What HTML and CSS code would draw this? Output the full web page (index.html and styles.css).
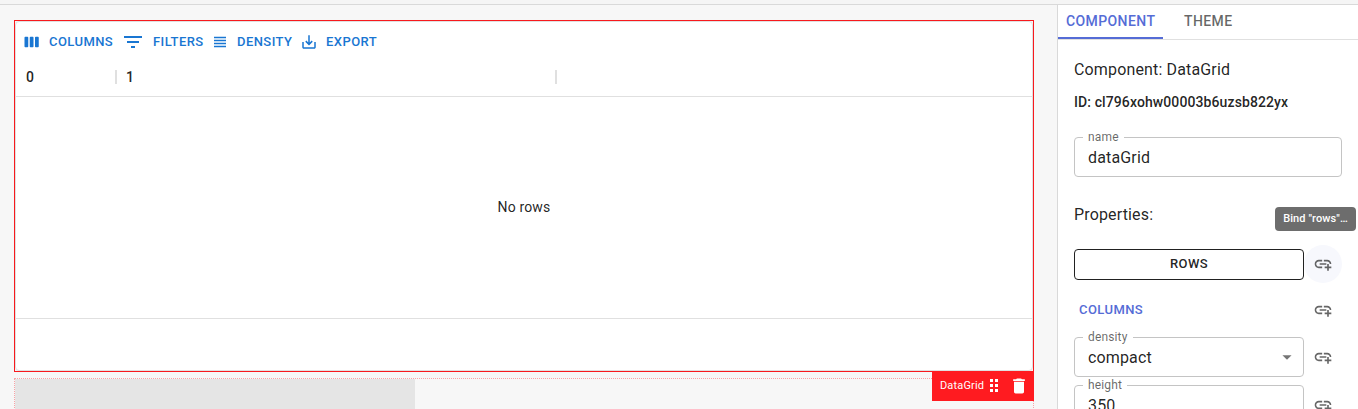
FILE: index.html
```html
<!DOCTYPE html>
<html lang="en">
<head>
<meta charset="utf-8">
<title>Editor</title>
<link rel="stylesheet" href="styles.css">
</head>
<body>
<svg class="defs" aria-hidden="true">
  <symbol id="add-link" viewBox="0 0 24 24"><path d="M8 11h8v2H8zm12.1 1H22c0-2.76-2.24-5-5-5h-4v1.9h4c1.71 0 3.1 1.39 3.1 3.1zM3.9 12c0-1.71 1.39-3.1 3.1-3.1h4V7H7c-2.76 0-5 2.24-5 5s2.24 5 5 5h4v-1.9H7c-1.71 0-3.1-1.39-3.1-3.1zM19 12h-2v3h-3v2h3v3h2v-3h3v-2h-3z"/></symbol>
</svg>
<div class="app">
  <header class="appbar"></header>
  <main class="workspace">
    <section class="canvas">
      <div class="selection">
        <div class="grid">
          <div class="toolbar">
            <button class="tool tool-columns"><svg viewBox="0 0 24 24"><path d="M6 5H3c-.55 0-1 .45-1 1v12c0 .55.45 1 1 1h3c.55 0 1-.45 1-1V6c0-.55-.45-1-1-1zm14 0h-3c-.55 0-1 .45-1 1v12c0 .55.45 1 1 1h3c.55 0 1-.45 1-1V6c0-.55-.45-1-1-1zm-7 0h-3c-.55 0-1 .45-1 1v12c0 .55.45 1 1 1h3c.55 0 1-.45 1-1V6c0-.55-.45-1-1-1z"/></svg><span>Columns</span></button>
            <button class="tool tool-filters"><svg viewBox="0 0 24 24"><path d="M10 18h4v-2h-4v2zM3 6v2h18V6H3zm3 7h12v-2H6v2z"/></svg><span>Filters</span></button>
            <button class="tool tool-density"><svg viewBox="0 0 12 12"><path class="density-fill" d="M0 0h12v12H0z"/><path d="M0 1h12v1H0zM0 4h12v1H0zM0 7h12v1H0zM0 10h12v1H0z"/></svg><span>Density</span></button>
            <button class="tool tool-export"><svg viewBox="0 0 24 24"><path d="M19 12v7H5v-7H3v7c0 1.1.9 2 2 2h14c1.1 0 2-.9 2-2v-7h-2zm-6 .67l2.59-2.58L17 11.5l-5 5-5-5 1.41-1.41L11 12.67V3h2z"/></svg><span>Export</span></button>
          </div>
          <div class="columns">
            <div class="column column-first">0</div>
            <div class="column column-second">1</div>
          </div>
          <div class="rows">No rows</div>
          <div class="grid-footer"></div>
        </div>
        <div class="hud">
          <span>DataGrid</span>
          <svg class="drag" viewBox="0 0 20 20"><path d="M6 3h3v3H6zm5 0h3v3h-3zM6 8h3v3H6zm5 0h3v3h-3zM6 13h3v3H6zm5 0h3v3h-3z"/></svg>
          <svg class="trash" viewBox="0 0 24 24"><path d="M6 19c0 1.1.9 2 2 2h8c1.1 0 2-.9 2-2V7H6v12zM19 4h-3.500l-1-1h-5l-1 1H5v2h14V4z"/></svg>
        </div>
      </div>
      <div class="slot"><div class="slot-fill"></div></div>
    </section>
    <aside class="panel">
      <nav class="tabs"><a class="tab tab-active">Component</a><a class="tab">Theme</a></nav>
      <div class="panel-body">
        <div class="component-name">Component: DataGrid</div>
        <div class="component-id">ID: cl796xohw00003b6uzsb822yx</div>
        <fieldset class="field field-name"><legend>name</legend><div class="value">dataGrid</div></fieldset>
        <div class="properties">Properties:<div class="tooltip">Bind "rows"…</div></div>
        <div class="prop prop-rows"><button class="outlined">Rows</button><span class="bind bind-hover"><svg><use href="#add-link"/></svg></span></div>
        <div class="prop prop-columns"><button class="text-button">Columns</button><span class="bind"><svg><use href="#add-link"/></svg></span></div>
        <div class="prop prop-select"><fieldset class="field"><legend>density</legend><div class="value">compact<svg class="caret" viewBox="0 0 24 24"><path d="M7 10l5 5 5-5z"/></svg></div></fieldset><span class="bind"><svg><use href="#add-link"/></svg></span></div>
        <div class="prop prop-select"><fieldset class="field"><legend>height</legend><div class="value">350</div></fieldset><span class="bind"><svg><use href="#add-link"/></svg></span></div>
      </div>
    </aside>
  </main>
</div>
</body>
</html>
```
FILE: styles.css
```css
* { box-sizing: border-box; }
body { margin: 0; font-family: Roboto, sans-serif; color: rgba(0,0,0,.87); overflow: hidden; }
button { font-family: inherit; margin: 0; padding: 0; border: 0; background: none; text-transform: uppercase; font-weight: 500; }
svg { display: block; fill: currentColor; flex: none; }
.defs { display: none; }
.app { width: 1358px; height: 409px; display: flex; flex-direction: column; overflow: hidden; }
.appbar { height: 5px; flex: none; background: #f5f5f5; border-bottom: 1px solid #d9d9d9; }
.workspace { flex: 1; min-height: 0; display: flex; background: #f7f7f7; }
.canvas { width: 1057px; padding: 15px 23px 0 14px; }
.selection { position: relative; height: 352px; border: 1px solid #f8191d; }
.grid { height: 350px; border: 1px solid #e0e0e0; border-radius: 4px; background: #fff; display: flex; flex-direction: column; }
.toolbar { height: 36px; display: flex; align-items: center; padding: 4px 0 0 7px; }
.tool { display: flex; align-items: center; height: 30px; font-size: 13px; letter-spacing: .43px; color: #1976d2; white-space: nowrap; }
.tool span { padding-bottom: 2px; }
.tool svg { width: 18px; height: 18px; }
.tool-columns { width: 98px; gap: 8px; }
.tool-filters { width: 93px; gap: 8px; }
.tool-filters svg { width: 24px; height: 24px; }
.tool-density { width: 86px; gap: 11px; }
.tool-density svg { width: 12px; height: 12px; }
.density-fill { opacity: .25; }
.tool-export { gap: 8px; }
.columns { height: 39px; display: flex; align-items: center; border-bottom: 1px solid #e0e0e0; font-size: 14px; font-weight: 500; letter-spacing: .15px; }
.column { height: 14px; line-height: 15px; padding-left: 10px; border-right: 2px solid #e0e0e0; }
.column-first { width: 101px; }
.column-second { width: 440px; padding-left: 9px; }
.rows { flex: 1; display: flex; align-items: center; justify-content: center; padding-bottom: 2px; font-size: 14px; letter-spacing: .15px; }
.grid-footer { height: 52px; border-top: 1px solid #e0e0e0; }
.hud { position: absolute; right: -1px; top: 350px; width: 102px; height: 30px; padding-left: 8px; display: flex; align-items: center; background: #ff1b20; color: #fff; font-size: 11px; letter-spacing: .15px; z-index: 1; }
.hud span { width: 44px; padding-bottom: 1px; white-space: nowrap; }
.drag { width: 20px; height: 20px; }
.trash { width: 20px; height: 20px; margin-left: 5px; }
.slot { margin-top: 6px; height: 60px; border: 1px dotted #f8a3a6; }
.slot-fill { width: 400px; height: 100%; background: #e5e5e5; }
.panel { width: 301px; border-left: 1px solid #d9d9d9; background: #fff; }
.tabs { height: 35px; display: flex; border-bottom: 1px solid #e0e0e0; font-size: 14px; font-weight: 500; letter-spacing: .4px; text-transform: uppercase; color: rgba(0,0,0,.6); }
.tab { height: 34px; line-height: 33px; padding: 0 8px; margin-right: 13px; }
.tab-active { width: 105px; border-bottom: 2px solid #556cd6; color: #556cd6; }
.panel-body { padding: 18px 16px 0; }
.component-name, .properties { font-size: 16px; line-height: 24px; letter-spacing: .15px; }
.component-id { margin-top: 9px; font-size: 14px; line-height: 22px; font-weight: 500; letter-spacing: .1px; }
.field { margin: 0; padding: 0; min-width: 0; width: 230px; height: 46px; border: 1px solid #c4c4c4; border-radius: 4px; }
.field legend { margin-left: 8px; padding: 0 5px; height: 12px; font-size: 12px; line-height: 12px; letter-spacing: .15px; color: rgba(0,0,0,.6); }
.value { display: flex; align-items: center; justify-content: space-between; padding: 0 5px 0 13px; height: 28px; font-size: 16px; letter-spacing: .15px; }
.field-name { width: 268px; margin-top: 18px; }
.caret { width: 22px; height: 22px; color: rgba(0,0,0,.54); }
.properties { position: relative; margin-top: 26px; }
.tooltip { position: absolute; top: 4px; left: 201px; width: 81px; height: 24px; border-radius: 4px; background: #6d6d6d; color: #fff; font-size: 11px; font-weight: 500; line-height: 23px; letter-spacing: .1px; text-align: center; }
.prop { display: flex; align-items: center; }
.bind { width: 38px; height: 38px; display: flex; align-items: center; justify-content: center; border-radius: 50%; color: rgba(0,0,0,.6); }
.bind svg { width: 20px; height: 20px; }
.bind-hover { background: #f7f8fd; }
.prop-rows { margin-top: 18px; }
.outlined { width: 230px; height: 31px; padding-bottom: 2px; border: 1px solid #212121; border-radius: 4px; color: rgba(0,0,0,.87); font-size: 13px; letter-spacing: .43px; }
.prop-columns { margin-top: 8px; justify-content: space-between; }
.text-button { padding: 0 0 2px 5px; color: #556cd6; font-size: 13px; letter-spacing: .43px; }
.prop-select { margin: 2px 0; }
.prop-select + .prop-select { margin-top: 0; }
.prop-select .bind { padding-top: 6px; }
```
